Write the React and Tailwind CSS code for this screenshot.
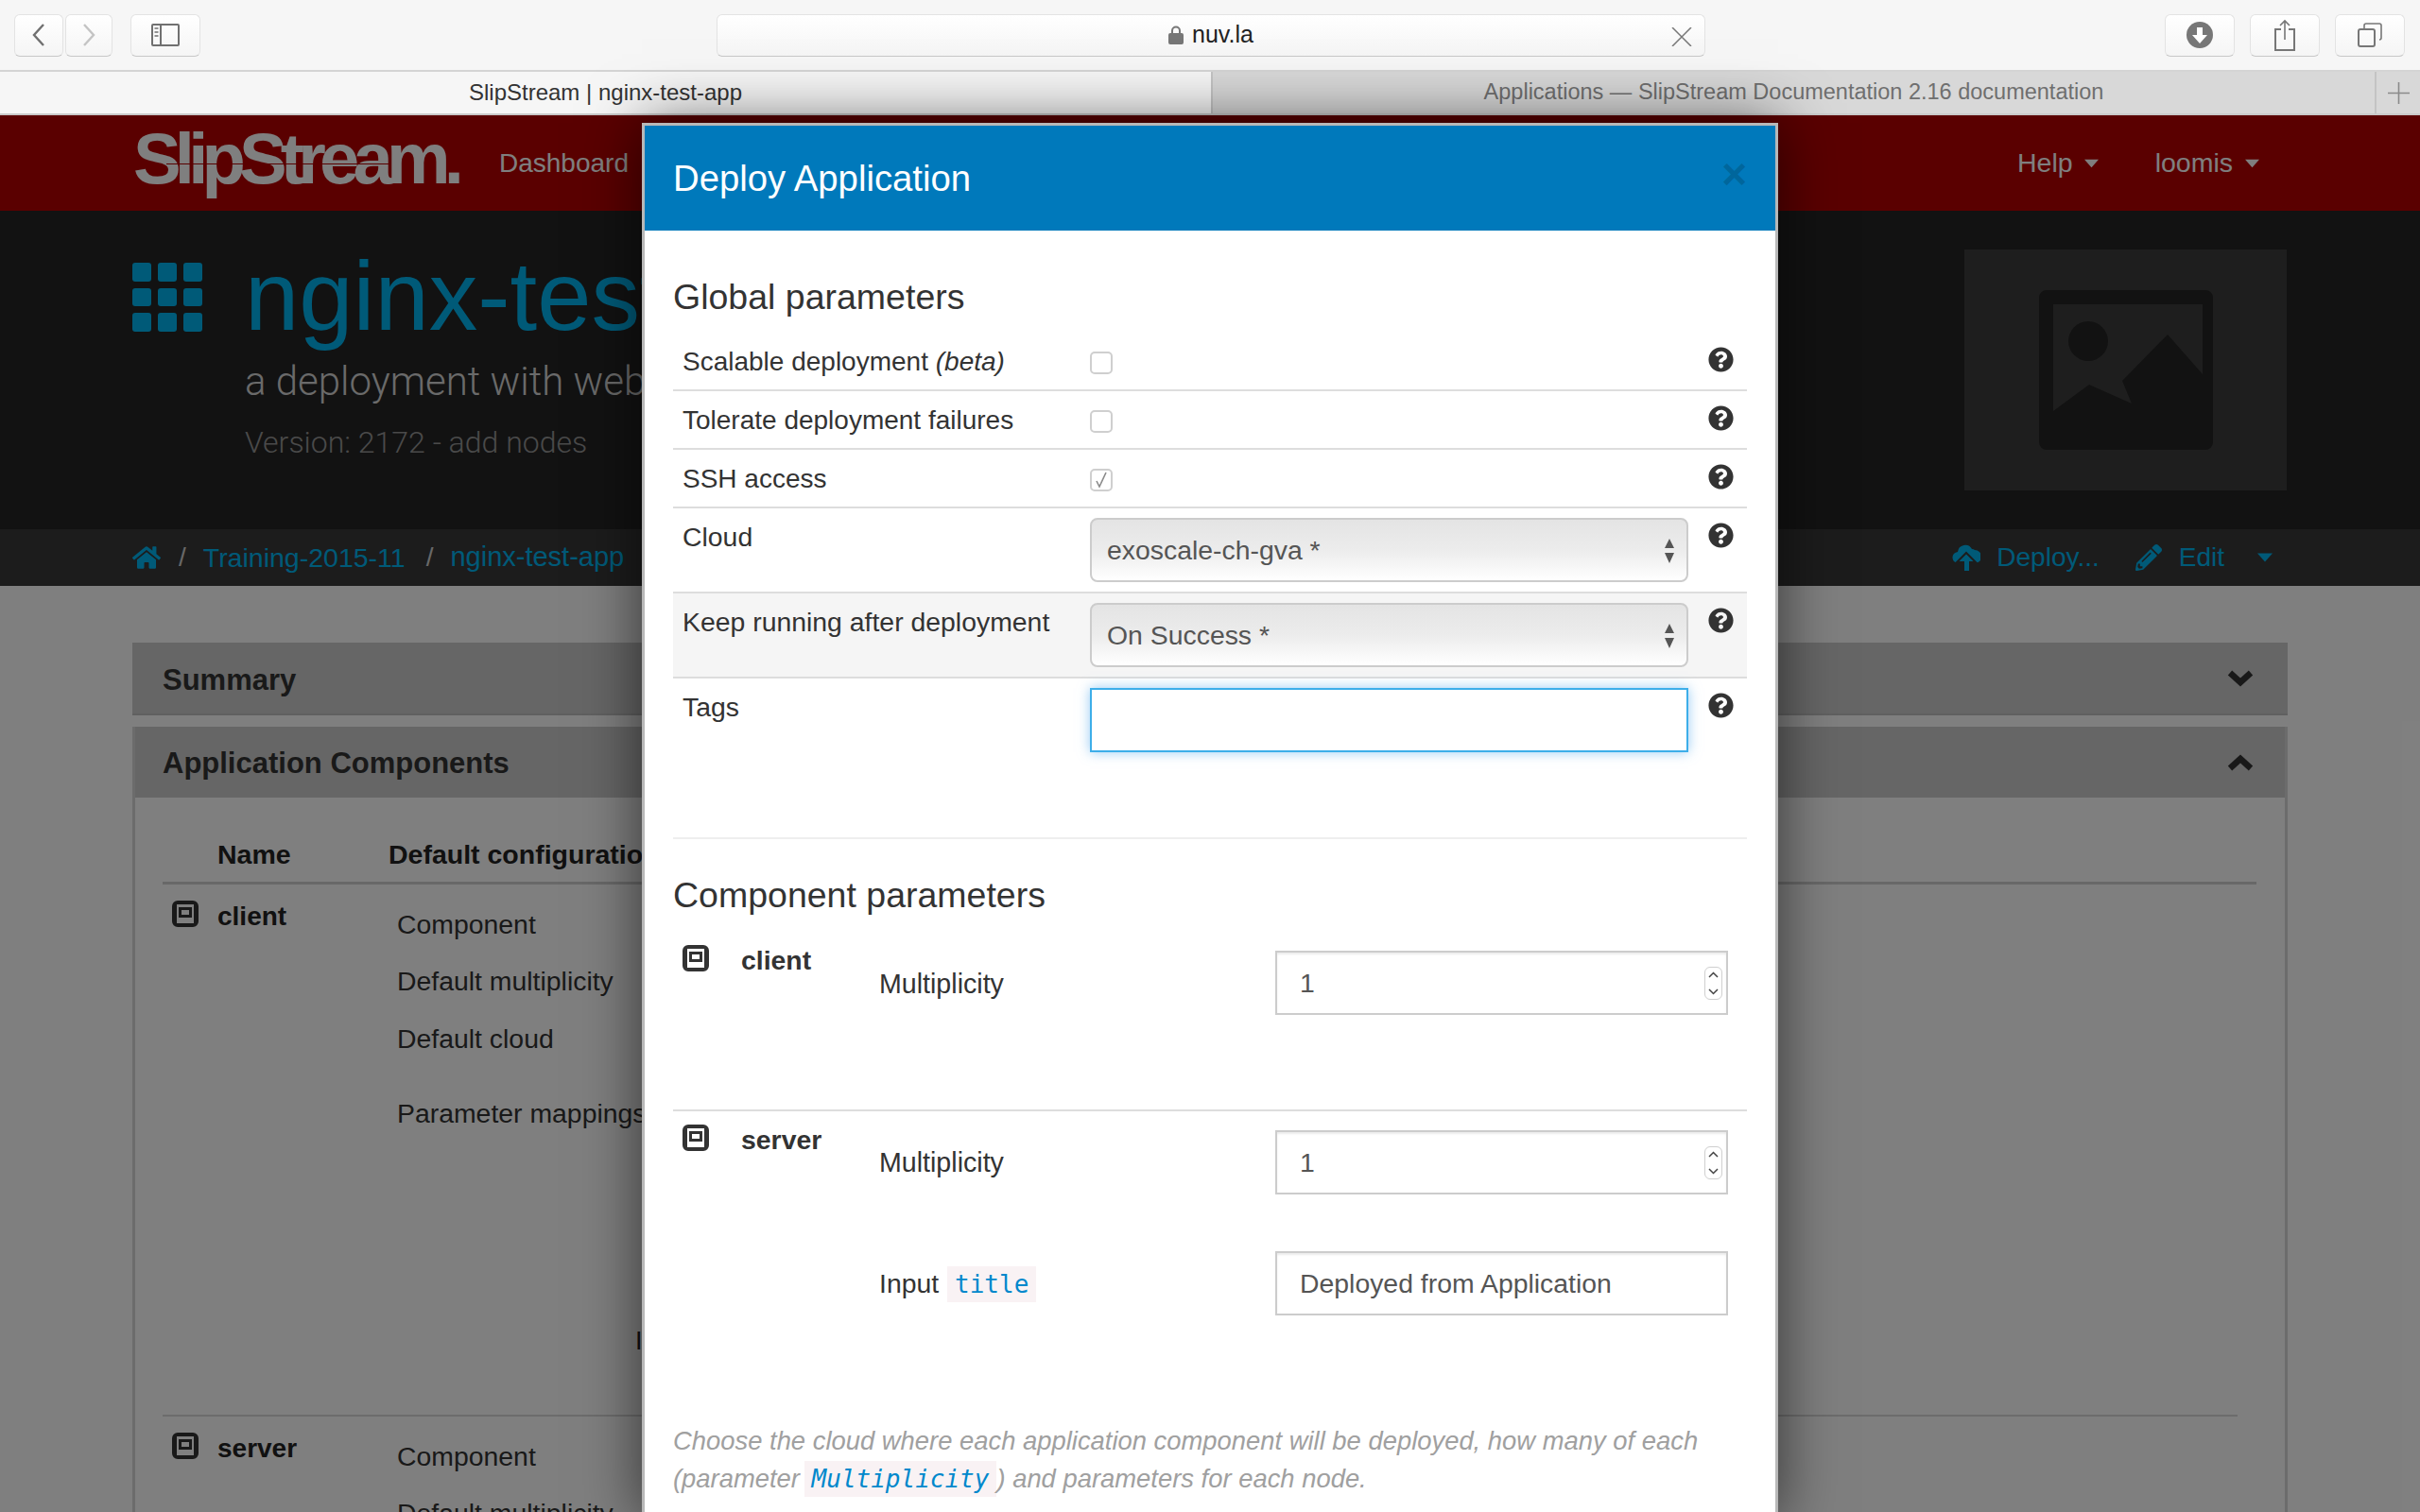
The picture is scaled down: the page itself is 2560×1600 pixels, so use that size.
import { FaQuestionCircle, FaHome, FaPencilAlt } from "react-icons/fa";

const sans = { fontFamily: "'Liberation Sans', Arial, sans-serif" };

const ToolButton = ({ className, children }) => (
  <div className={`h-[45px] flex items-center justify-center rounded-md bg-gradient-to-b from-white to-[#f5f5f5] border border-[#e3e3e3] border-b-[#c8c8c8] ${className}`}>
    {children}
  </div>
);

const Toolbar = () => (
  <div className="h-[76px] bg-[#f6f6f6] border-b-2 border-[#d4d4d4] flex items-center pl-[15px]">
    <ToolButton className="w-[52px]">
      <svg width="16" height="26" viewBox="0 0 16 26" fill="none" stroke="#707070" strokeWidth="2.4"><path d="M13 2 3 13l10 11" /></svg>
    </ToolButton>
    <ToolButton className="w-[50px] ml-[2px]">
      <svg width="16" height="26" viewBox="0 0 16 26" fill="none" stroke="#c4c4c4" strokeWidth="2.4"><path d="m3 2 10 11L3 24" /></svg>
    </ToolButton>
    <ToolButton className="w-[74px] ml-[19px]">
      <svg width="30" height="24" viewBox="0 0 30 24" fill="none" stroke="#707070" strokeWidth="2">
        <rect x="1" y="1" width="28" height="22" rx="1" />
        <path d="M10 1v22" />
        <path d="M3.5 5h4M3.5 9h4M3.5 13h4" strokeWidth="1.5" />
      </svg>
    </ToolButton>
    <ToolButton className="w-[1046px] ml-[546px] relative">
      <svg className="mr-[9px]" width="16" height="20" viewBox="0 0 16 20" fill="#777">
        <rect x="0" y="8" width="16" height="12" rx="2" />
        <path d="M4 9V5.5a4 4 0 0 1 8 0V9" fill="none" stroke="#777" strokeWidth="2" />
      </svg>
      <span className="text-[25px] text-[#222]">nuv.la</span>
      <svg className="absolute right-[13px] top-[13px]" width="22" height="20" viewBox="0 0 22 20" fill="none" stroke="#777" strokeWidth="1.5"><path d="m1 0 20 20M21 0 1 20" /></svg>
    </ToolButton>
    <ToolButton className="w-[74px] ml-[486px]">
      <svg width="28" height="28" viewBox="0 0 28 28">
        <circle cx="14" cy="14" r="14" fill="#777" />
        <path d="M11 6h6v8h5l-8 9-8-9h5z" fill="#fff" />
      </svg>
    </ToolButton>
    <ToolButton className="w-[74px] ml-[16px]">
      <svg width="22" height="34" viewBox="0 0 22 34" fill="none" stroke="#777" strokeWidth="2">
        <path d="M7 11H1v22h20V11h-6" />
        <path d="M11 22V2M6 7l5-5 5 5" strokeWidth="1.6" />
      </svg>
    </ToolButton>
    <ToolButton className="w-[74px] ml-[16px]">
      <svg width="26" height="26" viewBox="0 0 26 26" fill="none" stroke="#777" strokeWidth="2">
        <rect x="1" y="7" width="17" height="18" rx="2" />
        <path d="M7 7V3a2 2 0 0 1 2-2h14a2 2 0 0 1 2 2v13a2 2 0 0 1-2 2" strokeWidth="1.6" />
      </svg>
    </ToolButton>
  </div>
);

const TabBar = () => (
  <div className="h-[46px] flex border-b-2 border-[#c9c9c9] text-[24px]">
    <div className="w-[1281px] bg-[#f6f6f6] flex items-center justify-center text-[#333]">SlipStream | nginx-test-app</div>
    <div className="flex-1 bg-[#d8d8d8] border-l-2 border-[#c4c4c4] flex items-center justify-center text-[#6f6f6f] text-[23.5px]">Applications — SlipStream Documentation 2.16 documentation</div>
    <div className="w-[48px] bg-[#d8d8d8] border-l-2 border-[#c4c4c4] flex items-center justify-center">
      <svg width="23" height="23" viewBox="0 0 23 23" stroke="#8a8a8a" strokeWidth="1.6"><path d="M11.5 0v23M0 11.5h23" /></svg>
    </div>
  </div>
);

const Caret = ({ className }) => (
  <svg className={className} width="18" height="10" viewBox="0 0 18 10" fill="currentColor"><path d="M0 0h18L9 10z" /></svg>
);

const NavBar = () => (
  <div className="h-[101px] bg-[#b40000] flex items-center pl-[141px] pr-[170px] text-white">
    <div className="relative w-[387px] text-[76px] leading-none font-bold tracking-[-0.09em] -mt-[9px]">
      SlipStream.
      <span className="absolute left-[35px] top-[43px] w-[235px] h-[1px] bg-[#b40000]" />
    </div>
    <span className="text-[28px]">Dashboard</span>
    <div className="ml-auto flex items-center text-[28.5px]">
      <span>Help</span>
      <Caret className="ml-[12px] w-[15px]" />
      <span className="ml-[60px]">loomis</span>
      <Caret className="ml-[13px] w-[15px]" />
    </div>
  </div>
);

const Hero = () => (
  <div className="h-[337px] bg-[#242424] flex pl-[140px] pr-[141px]">
    <div className="w-[74px] h-[73px] mt-[55px] grid grid-cols-3 gap-[7px]">
      {[0, 1, 2, 3, 4, 5, 6, 7, 8].map((i) => (
        <div key={i} className="bg-[#00b4f0] rounded-[3px]" />
      ))}
    </div>
    <div className="ml-[45px] flex flex-col">
      <div className="text-[103px] h-[100px] leading-[100px] text-[#00b4f0] mt-[41px] whitespace-nowrap">nginx-test-app</div>
      <div className="text-[42px] leading-none font-light text-[#d4d4d4] mt-[19px] whitespace-nowrap" style={{ fontFamily: "Roboto, sans-serif" }}>a deployment with web server and client</div>
      <div className="text-[32px] leading-none font-light text-[#949494] mt-[27px] whitespace-nowrap" style={{ fontFamily: "Roboto, sans-serif" }}>Version: 2172 - add nodes</div>
    </div>
    <div className="ml-auto mt-[41px] w-[341px] h-[255px] bg-[#3c3c3c] flex items-center justify-center">
      <svg width="184" height="169" viewBox="0 0 184 169" fill="#242424">
        <path fillRule="evenodd" d="M8 0h168a8 8 0 0 1 8 8v153a8 8 0 0 1-8 8H8a8 8 0 0 1-8-8V8a8 8 0 0 1 8-8zm7 15v113l38-28 45 20-10-24 48-49 37 42V15z" />
        <ellipse cx="52" cy="54" rx="21" ry="21" />
      </svg>
    </div>
  </div>
);

const CloudUpload = ({ className }) => (
  <svg className={className} width="30" height="30" viewBox="0 0 30 30" fill="currentColor">
    <path d="M7 21a6 6 0 0 1-1-12 8 8 0 0 1 15-3 6 6 0 0 1 3 1 7 7 0 0 1 0 14z" />
    <path d="M15 10l10 10h-6v10h-7V20H5z" stroke="#383838" strokeWidth="2" />
  </svg>
);

const Breadcrumb = () => (
  <div className="h-[60px] bg-[#383838] flex items-center pl-[140px] pr-[156px] text-[28px] text-[#00b4f0]">
    <FaHome className="w-[30px] h-[28px]" />
    <span className="ml-[19px] text-[#d0d0d0]">/</span>
    <span className="ml-[18px] text-[28.5px]">Training-2015-11</span>
    <span className="ml-[22px] text-[#d0d0d0]">/</span>
    <span className="ml-[18px] text-[29px]">nginx-test-app</span>
    <CloudUpload className="ml-auto" />
    <span className="ml-[17px]">Deploy...</span>
    <FaPencilAlt className="ml-[38px] w-[28px] h-[28px]" />
    <span className="ml-[18px]">Edit</span>
    <Caret className="ml-[35px] w-[16px]" />
  </div>
);

const Chevron = ({ up }) => (
  <svg width="28" height="18" viewBox="0 0 28 18" fill="none" stroke="#333" strokeWidth="6.5">
    <path d={up ? "M3 15 14 5l11 10" : "M3 3l11 10L25 3"} />
  </svg>
);

const ComponentIcon = ({ className, fill = "#333" }) => (
  <svg className={className} width="28" height="28" viewBox="0 0 28 28">
    <path fillRule="evenodd" fill={fill} d="M6 0h16a6 6 0 0 1 6 6v16a6 6 0 0 1-6 6H6a6 6 0 0 1-6-6V6a6 6 0 0 1 6-6zm-1 4v20h18V4z" />
    <path fillRule="evenodd" fill={fill} d="M7 7h14v11H7zm3 3v5h8v-5z" />
  </svg>
);

const NodeRow = ({ name, className }) => (
  <div className={`flex pl-[10px] text-[#222] ${className}`}>
    <ComponentIcon fill="#333" className="mt-[17px] w-[28px] h-[28px]" />
    <span className="ml-[20px] mt-[20px] font-bold text-[28px] leading-none w-[190px]">{name}</span>
    <div className="text-[28.4px] leading-none text-[#333] mt-[28px]">
      <div>Component</div>
      <div className="mt-[32px]">Default multiplicity</div>
      <div className="mt-[32px]">Default cloud</div>
      <div className="mt-[51px]">Parameter mappings</div>
    </div>
  </div>
);

const Page = () => (
  <div className="bg-white flex-1 px-[140px] pt-[60px] overflow-hidden" style={sans}>
    <div className="h-[77px] bg-[#cccccc] border-b-2 border-[#c0c0c0] flex items-center justify-between pl-[32px] pr-[36px]">
      <span className="text-[31px] font-bold text-[#333] mt-[5px]">Summary</span>
      <Chevron />
    </div>
    <div className="mt-[12px] border-x-[3px] border-[#d8d8d8] h-[900px]">
      <div className="h-[75px] bg-[#cccccc] flex items-center justify-between pl-[29px] pr-[33px]">
        <span className="text-[31px] font-bold text-[#333] mt-[4px]">Application Components</span>
        <Chevron up />
      </div>
      <div className="ml-[29px] mr-[30px] h-[92px] border-b-[3px] border-[#d0d0d0] flex items-end pb-[15px] text-[28.5px] font-bold leading-none text-[#222]">
        <span className="ml-[58px] w-[181px]">Name</span>
        <span>Default configuration</span>
      </div>
      <div className="ml-[29px] mr-[50px] h-[563px] border-b-2 border-[#d8d8d8] relative">
        <NodeRow name="client" />
        <span className="absolute left-[500px] top-[470px] text-[27px] leading-none text-[#222]">Input</span>
      </div>
      <NodeRow name="server" className="ml-[29px]" />
    </div>
  </div>
);

const HelpIcon = () => <FaQuestionCircle className="w-[27px] h-[27px] text-[#333] shrink-0" />;

const Check = ({ checked }) => (
  <div className="w-[24px] h-[24px] mt-[4px] rounded-[5px] border-2 border-[#cfcfcf] bg-white flex items-center justify-center">
    {checked && (
      <svg width="14" height="18" viewBox="0 0 14 18" fill="none" stroke="#8a8a8a" strokeWidth="1.6"><path d="m2 10 3 6 7-15" /></svg>
    )}
  </div>
);

const CheckRow = ({ label, checked }) => (
  <div className="h-[62px] border-b-2 border-[#dddddd] flex items-center pl-[10px] pr-[14px]">
    <span className="w-[431px] text-[#333] text-[28px] mt-[2px]">{label}</span>
    <Check checked={checked} />
    <span className="ml-auto -mt-[4px] flex"><HelpIcon /></span>
  </div>
);

const SelectRow = ({ label, value, className }) => (
  <div className={`h-[90px] border-b-2 border-[#dddddd] flex pl-[10px] pr-[14px] pt-[10px] ${className}`}>
    <span className="w-[431px] text-[#333] leading-none pt-[6px]">{label}</span>
    <div className="relative w-[633px] h-[68px]">
      <select defaultValue={value} className="appearance-none w-full h-full rounded-[8px] border-2 border-[#cccccc] bg-gradient-to-b from-[#e4e4e4] via-[#ececec] to-white pl-[16px] text-[#555] outline-none">
        <option>{value}</option>
      </select>
      <svg className="absolute right-[14px] top-[22px]" width="12" height="26" viewBox="0 0 12 26" fill="#555"><path d="M6 0l5 10H1zM1 15h10l-5 11z" /></svg>
    </div>
    <span className="ml-auto pt-[5px]"><HelpIcon /></span>
  </div>
);

const Spinner = () => (
  <div className="absolute right-[6px] top-[17px] w-[19px] h-[35px] rounded-[6px] border border-[#cfcfcf] flex items-center justify-center bg-white">
    <svg width="11" height="25" viewBox="0 0 11 25" fill="none" stroke="#444" strokeWidth="1.5"><path d="m1 6 4.5-4.5L10 6M1 19l4.5 4.5L10 19" /></svg>
  </div>
);

const ParamInput = ({ value, spinner }) => (
  <div className="relative w-[479px] h-[68px] shrink-0">
    <input readOnly value={value} className="w-full h-full border-2 border-[#cccccc] shadow-[inset_0_2px_2px_rgba(0,0,0,0.08)] pl-[24px] text-[#555] outline-none" />
    {spinner && <Spinner />}
  </div>
);

const Code = ({ children, className }) => (
  <code className={`inline-block h-[38px] leading-[38px] px-[8px] bg-[#f9f2f4] text-[#0088cc] text-[26px] ${className}`} style={{ fontFamily: "'DejaVu Sans Mono', monospace" }}>
    {children}
  </code>
);

const Modal = () => (
  <div className="absolute left-[679px] top-[130px] w-[1202px] h-[1480px] bg-white border-[3px] border-[#b8b8b8] border-b-0 shadow-[0_0_60px_rgba(0,0,0,0.6)] text-[28.4px]" style={sans}>
    <div className="h-[111px] bg-[#0079bb] flex items-center justify-between pl-[30px] pr-[30px]">
      <span className="text-[38.3px] text-white">Deploy Application</span>
      <span className="text-[46px] font-bold leading-none text-[#00669c] -mt-[10px]">×</span>
    </div>
    <div className="px-[30px]">
      <h2 className="text-[37.5px] h-[38px] text-[#333] leading-none mt-[52px] mb-[18px]">Global parameters</h2>
      <CheckRow label={<>Scalable deployment <i>(beta)</i></>} />
      <CheckRow label="Tolerate deployment failures" />
      <CheckRow label="SSH access" checked />
      <SelectRow label="Cloud" value="exoscale-ch-gva *" />
      <SelectRow label="Keep running after deployment" value="On Success *" className="bg-[#f5f5f5]" />
      <div className="h-[170px] border-b-2 border-[#eeeeee] flex pl-[10px] pr-[14px] pt-[10px]">
        <span className="w-[431px] text-[#333] leading-none pt-[6px]">Tags</span>
        <input readOnly className="w-[633px] h-[68px] border-2 border-[#3daee9] shadow-[0_0_12px_rgba(82,168,236,0.6)] outline-none" />
        <span className="ml-auto pt-[5px]"><HelpIcon /></span>
      </div>
      <h2 className="text-[37.5px] h-[38px] text-[#333] leading-none mt-[41px]">Component parameters</h2>
      <div className="h-[207px] flex pl-[10px] pt-[33px]">
        <ComponentIcon className="shrink-0" />
        <span className="ml-[34px] w-[146px] shrink-0 font-bold leading-none text-[#333] pt-[2px]">client</span>
        <span className="w-[419px] shrink-0 leading-none text-[#333] pt-[27px] text-[28.6px]">Multiplicity</span>
        <div className="mt-[6px]"><ParamInput value="1" spinner /></div>
      </div>
      <div className="h-[220px] border-t-2 border-[#dddddd] flex pl-[10px] pt-[14px]">
        <ComponentIcon className="shrink-0" />
        <span className="ml-[34px] w-[146px] shrink-0 font-bold leading-none text-[#333] pt-[2px]">server</span>
        <div className="flex flex-col mt-[6px]">
          <div className="flex items-center">
            <span className="w-[419px] shrink-0 text-[#333] text-[28.6px]">Multiplicity</span>
            <ParamInput value="1" spinner />
          </div>
          <div className="flex items-center mt-[60px]">
            <span className="w-[419px] shrink-0 text-[#333]">Input <Code className="ml-[1px]">title</Code></span>
            <ParamInput value="Deployed from Application" />
          </div>
        </div>
      </div>
      <p className="mt-[111px] text-[#a0a0a0] italic text-[27.4px] leading-[40px]">
        Choose the cloud where each application component will be deployed, how many of each (parameter <Code className="-ml-[3px]">Multiplicity</Code>) and parameters for each node.
      </p>
    </div>
  </div>
);

const App = () => (
  <div className="relative w-[2560px] h-[1600px] overflow-hidden flex flex-col" style={sans}>
    <Toolbar />
    <TabBar />
    <NavBar />
    <Hero />
    <Breadcrumb />
    <Page />
    {/* backdrop starts below the browser chrome */}
    <div className="absolute left-0 right-0 top-[122px] bottom-0 bg-black/50" />
    <Modal />
  </div>
);

export default App;
